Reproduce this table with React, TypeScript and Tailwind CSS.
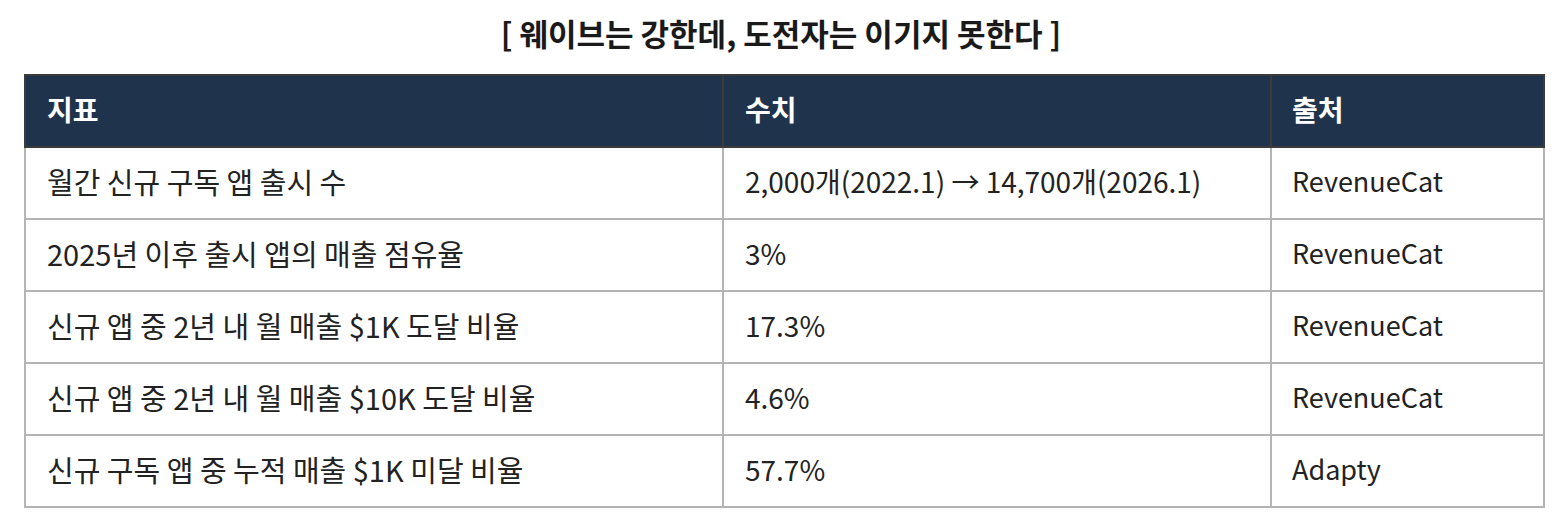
import React from "react";

const rows: [string, string, string][] = [
  ["월간 신규 구독 앱 출시 수", "2,000개(2022.1) → 14,700개(2026.1)", "RevenueCat"],
  ["2025년 이후 출시 앱의 매출 점유율", "3%", "RevenueCat"],
  ["신규 앱 중 2년 내 월 매출 $1K 도달 비율", "17.3%", "RevenueCat"],
  ["신규 앱 중 2년 내 월 매출 $10K 도달 비율", "4.6%", "RevenueCat"],
  ["신규 구독 앱 중 누적 매출 $1K 미달 비율", "57.7%", "Adapty"],
];

export default function App() {
  return (
    <div
      className="w-[1562px] h-[524px] bg-white text-[#222222]"
      style={{ fontFamily: '"Noto Sans CJK KR", "Noto Sans", sans-serif' }}
    >
      <div className="pt-[12px] h-[74px] text-center text-[31px] font-bold leading-[42px] text-[#1a1a1a]">
        [ 웨이브는 강한데, 도전자는 이기지 못한다 ]
      </div>
      <table className="ml-[24px] w-[1519px] border-collapse table-fixed">
        <colgroup>
          <col className="w-[698px]" />
          <col className="w-[548px]" />
          <col className="w-[273px]" />
        </colgroup>
        <thead>
          <tr className="h-[72px]">
            <th className="border-2 border-[#3b3b3b] bg-[#1f344c] pl-[21px] pb-[4px] text-left text-[28px] font-bold text-white">
              지표
            </th>
            <th className="border-2 border-[#3b3b3b] bg-[#1f344c] pl-[21px] pb-[4px] text-left text-[28px] font-bold text-white">
              수치
            </th>
            <th className="border-2 border-[#3b3b3b] bg-[#1f344c] pl-[20px] pb-[4px] text-left text-[28px] font-bold text-white">
              출처
            </th>
          </tr>
        </thead>
        <tbody>
          {rows.map((r, i) => (
            <tr key={i} className="h-[72px]">
              <td className="border-2 border-[#b4b4b4] pl-[21px] pb-[4px] text-[29px] leading-[40px]">{r[0]}</td>
              <td className="border-2 border-[#b4b4b4] pl-[21px] pb-[4px] text-[28px] leading-[40px]">{r[1]}</td>
              <td className="border-2 border-[#b4b4b4] pl-[20px] pb-[4px] text-[27px] leading-[40px]">{r[2]}</td>
            </tr>
          ))}
        </tbody>
      </table>
    </div>
  );
}
